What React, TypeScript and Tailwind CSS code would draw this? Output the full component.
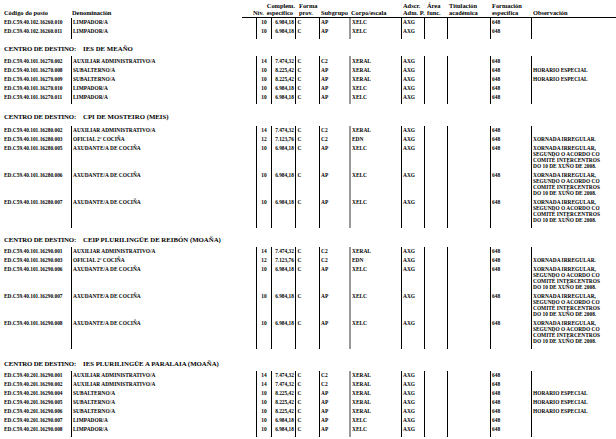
import React from 'react';

type Post = {
  code: string;
  den: string;
  niv: string;
  comp: string;
  sub: string;
  corpo: string;
  obs?: string[];
};

type Section = {
  name?: string;
  mt: string;
  mb: string;
  rows: Post[];
};

const cols =
  'grid grid-cols-[71px_185px_15px_24px_24px_30px_52px_23px_23px_43px_41px_85px]';

const XORNADA = [
  'XORNADA IRREGULAR,',
  'SEGUNDO O ACORDO CO',
  'COMITÉ INTERCENTROS',
  'DO 10 DE XUÑO DE 2008.',
];
const HORARIO = ['HORARIO ESPECIAL'];

const limpador = (code: string): Post => ({
  code,
  den: 'LIMPADOR/A',
  niv: '10',
  comp: '6.984,18',
  sub: 'AP',
  corpo: 'XELC',
});
const auxiliar = (code: string): Post => ({
  code,
  den: 'AUXILIAR ADMINISTRATIVO/A',
  niv: '14',
  comp: '7.474,32',
  sub: 'C2',
  corpo: 'XERAL',
});
const subalterno = (code: string): Post => ({
  code,
  den: 'SUBALTERNO/A',
  niv: '10',
  comp: '8.225,42',
  sub: 'AP',
  corpo: 'XERAL',
  obs: HORARIO,
});
const oficial = (code: string): Post => ({
  code,
  den: 'OFICIAL 2ª COCIÑA',
  niv: '12',
  comp: '7.123,76',
  sub: 'C2',
  corpo: 'EDN',
  obs: ['XORNADA IRREGULAR.'],
});
const axudante = (code: string): Post => ({
  code,
  den: 'AXUDANTE/A DE COCIÑA',
  niv: '10',
  comp: '6.984,18',
  sub: 'AP',
  corpo: 'XELC',
  obs: XORNADA,
});

const sections: Section[] = [
  {
    mt: 'mt-0',
    mb: 'mb-0',
    rows: [limpador('ED.C59.40.102.16260.010'), limpador('ED.C59.40.102.16260.011')],
  },
  {
    name: 'IES DE MEAÑO',
    mt: 'mt-[7px]',
    mb: 'mb-[3px]',
    rows: [
      auxiliar('ED.C59.40.101.16270.002'),
      subalterno('ED.C59.40.101.16270.008'),
      subalterno('ED.C59.40.101.16270.009'),
      limpador('ED.C59.40.101.16270.010'),
      limpador('ED.C59.40.101.16270.011'),
    ],
  },
  {
    name: 'CPI DE MOSTEIRO (MEIS)',
    mt: 'mt-[9.5px]',
    mb: 'mb-[4.5px]',
    rows: [
      auxiliar('ED.C59.40.101.16280.002'),
      oficial('ED.C59.40.101.16280.003'),
      axudante('ED.C59.40.101.16280.005'),
      axudante('ED.C59.40.101.16280.006'),
      axudante('ED.C59.40.101.16280.007'),
    ],
  },
  {
    name: 'CEIP PLURILINGÜE DE REIBÓN (MOAÑA)',
    mt: 'mt-[9px]',
    mb: 'mb-[2.5px]',
    rows: [
      auxiliar('ED.C59.40.101.16290.001'),
      oficial('ED.C59.40.101.16290.003'),
      axudante('ED.C59.40.101.16290.006'),
      axudante('ED.C59.40.101.16290.007'),
      axudante('ED.C59.40.101.16290.008'),
    ],
  },
  {
    name: 'IES PLURILINGÜE A PARALAIA (MOAÑA)',
    mt: 'mt-[12px]',
    mb: 'mb-[2.5px]',
    rows: [
      auxiliar('ED.C59.40.201.16290.001'),
      auxiliar('ED.C59.40.201.16290.002'),
      subalterno('ED.C59.40.201.16290.004'),
      subalterno('ED.C59.40.201.16290.005'),
      subalterno('ED.C59.40.201.16290.006'),
      limpador('ED.C59.40.201.16290.007'),
      limpador('ED.C59.40.201.16290.008'),
    ],
  },
];

const cell = 'py-[1.5px] whitespace-nowrap';
const bl = 'border-0 border-l border-solid border-black';

function Cells({ r }: { r?: Post }) {
  return (
    <>
      <div className={`${cell} pl-[4px]`}>{r?.code}</div>
      <div className={`${cell} ${bl} pl-[1px]`}>{r?.den}</div>
      <div className={`${cell} ${bl} text-center`}>{r?.niv}</div>
      <div className={`${cell} ${bl} text-right pr-[1px]`}>{r?.comp}</div>
      <div className={`${cell} ${bl} pl-[1.5px]`}>{r && 'C'}</div>
      <div className={`${cell} ${bl} pl-[1px]`}>{r?.sub}</div>
      <div className={`${cell} border-0 border-l-[2px] border-solid border-[#9a9a9a] pl-[1px]`}>
        {r?.corpo}
      </div>
      <div className={`${cell} ${bl} pl-[1px]`}>{r && 'AXG'}</div>
      <div className={`${cell} ${bl}`} />
      <div className={`${cell} ${bl}`} />
      <div className={`${cell} ${bl} pl-[1px]`}>{r && '648'}</div>
      <div className={`${cell} border-0 border-l-[1.5px] border-solid border-black pl-[1px]`}>
        {r?.obs?.map((l) => (
          <div key={l}>{l}</div>
        ))}
      </div>
    </>
  );
}

function Header() {
  return (
    <div className="text-[6.4px] leading-[7.5px] pt-[1.5px]">
      <div className={cols}>
        <div className="pl-[4px] pt-[7.5px] whitespace-nowrap">Código do posto</div>
        <div className="pl-[1px] pt-[7.5px]">Denominación</div>
        <div className="-ml-[3px] pt-[7.5px]">Nív.</div>
        <div className="flex flex-col items-end whitespace-nowrap">
          <span>Complem.</span>
          <span className="pr-[2px]">específico</span>
        </div>
        <div className="pl-[4px] flex flex-col">
          <span>Forma</span>
          <span>prov.</span>
        </div>
        <div className="pl-[2px] pt-[7.5px]">Subgrupo</div>
        <div className="pl-[2px] pt-[7.5px] whitespace-nowrap">Corpo/escala</div>
        <div className="pl-[2px] flex flex-col whitespace-nowrap">
          <span>Adscr.</span>
          <span>Adm. P.</span>
        </div>
        <div className="pl-[3px] flex flex-col">
          <span>Área</span>
          <span>func.</span>
        </div>
        <div className="pl-[2px] flex flex-col">
          <span>Titulación</span>
          <span>académica</span>
        </div>
        <div className="pl-[2px] flex flex-col">
          <span>Formación</span>
          <span>específica</span>
        </div>
        <div className="pl-[2px] pt-[7.5px]">Observación</div>
      </div>
      <div className="ml-[242px] h-px bg-black" />
    </div>
  );
}

export default function App() {
  return (
    <div className="w-[616px] h-[439px] overflow-hidden bg-white text-black font-['Liberation_Serif',serif] font-bold">
      <Header />
      {sections.map((s, i) => (
        <div key={i}>
          {s.name && (
            <div className={`flex pl-[4px] text-[6.8px] leading-[8px] ${s.mt} ${s.mb}`}>
              <span className="w-[79px] shrink-0 tracking-[-0.15px]">CENTRO DE DESTINO:</span>
              <span>{s.name}</span>
            </div>
          )}
          <div className="text-[5.4px] leading-[6px]">
            {s.rows.map((r) => (
              <div key={r.code} className={cols}>
                <Cells r={r} />
              </div>
            ))}
            <div className={`${cols} h-[2.5px]`}>
              <Cells />
            </div>
          </div>
        </div>
      ))}
    </div>
  );
}
